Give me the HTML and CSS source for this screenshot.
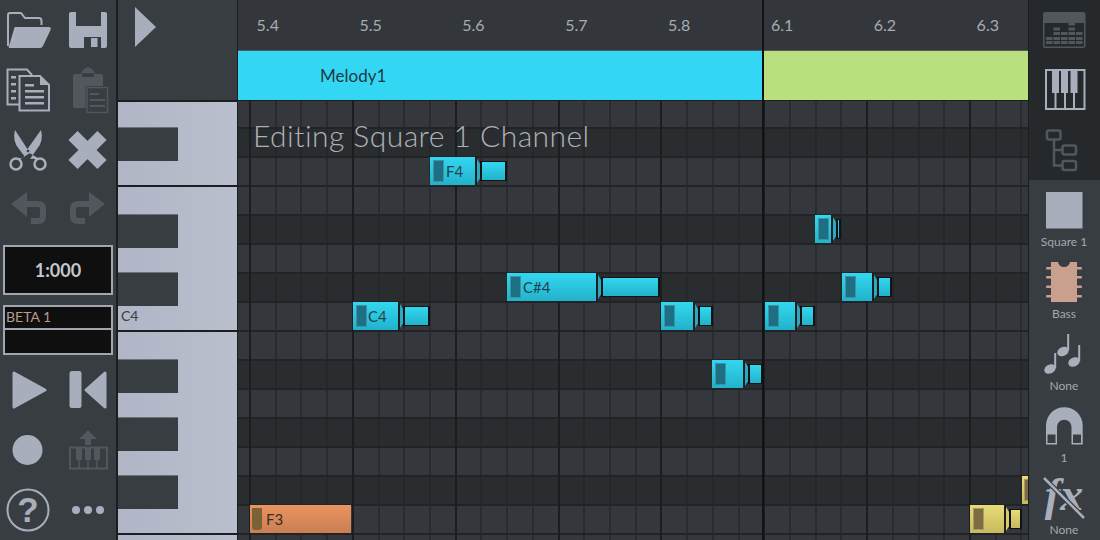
FILE: index.html
```html
<!DOCTYPE html>
<html lang="en">
<head>
  <meta charset="UTF-8">
  <title>Piano Roll</title>
  <link rel="stylesheet" href="styles.css">
</head>
<body>
<div class="app">

  <!-- left toolbar -->
  <aside class="toolbar">
    <div class="tool-row">
      <svg class="icon" viewBox="5 6 48 48"><path class="line" fill="none" stroke-width="2" d="M8 46 V15 Q8 13 10 13 H21 L25 18 H39 Q41.500 18 41.500 21 V25"/><path d="M15 27 H49 Q51.500 27 50.500 30 L43 46 Q42 48 40 48 H10 Q8 48 9 46 L14 29 Q14.500 27 15 27 Z"/></svg>
      <svg class="icon" viewBox="63 6 48 48"><path fill-rule="evenodd" d="M71 12 H105 Q107 12 107 14 V46 Q107 48 105 48 H71 Q69 48 69 46 V14 Q69 12 71 12 Z M76 12 V26 H101 V12 Z M84 37 V48 H101 V37 Z"/><rect x="91" y="38" width="6.500" height="9"/></svg>
    </div>
    <div class="tool-row">
      <svg class="icon" viewBox="5 66 48 48"><g class="line" fill="none" stroke-width="2"><path d="M19 104.500 H7.500 V69.500 H27 L32 75"/><path d="M19.500 76 H40 L49 85 V110.500 H19.500 Z"/></g><path d="M40 76 L49 85 H40 Z"/><rect x="11" y="76" width="5" height="2.500"/><rect x="11" y="83" width="5" height="2.500"/><rect x="11" y="90" width="5" height="2.500"/><rect x="11" y="97" width="5" height="2.500"/><rect x="25" y="84" width="9" height="2.500"/><rect x="25" y="90" width="19" height="2.500"/><rect x="25" y="96" width="19" height="2.500"/><rect x="25" y="102" width="19" height="2.500"/></svg>
      <svg class="icon off" viewBox="63 66 48 48"><path d="M75 74 H81 Q83 68 88 67.500 Q93 68 95 74 H101 Q103 74 103 76 V108 H75 Q73 108 73 106 V76 Q73 74 75 74 Z"/><rect class="hole" x="82" y="73" width="12" height="4" rx="1.500"/><rect class="hole" x="85.500" y="86" width="23.500" height="28.500"/><rect x="87" y="87.500" width="20.500" height="25" fill="none" class="line" stroke-width="1.500"/><rect x="90" y="93" width="9" height="2"/><rect x="90" y="99" width="15" height="2"/><rect x="90" y="105" width="15" height="2"/></svg>
    </div>
    <div class="tool-row">
      <svg class="icon" viewBox="5 126 48 48"><circle class="line" cx="16" cy="164" r="5.500" fill="none" stroke-width="2.500"/><circle class="line" cx="40" cy="164" r="5.500" fill="none" stroke-width="2.500"/><path d="M15 130 Q12 141 19 149 L25 157 Q21 157 20 160 L18 158 L22 158 L30 153 Z"/><path d="M41 130 Q44 141 37 149 L30 159 Q34 158 36 160 L38 158 L26 151 Z"/><circle class="hole" cx="28" cy="151" r="1.300"/></svg>
      <svg class="icon" viewBox="63 126 48 48"><path class="line" fill="none" stroke-width="13" d="M73 135.500 L102 164.500 M102 135.500 L73 164.500"/></svg>
    </div>
    <div class="tool-row">
      <svg class="icon off" viewBox="5 185 48 48"><path d="M11 204 L27 192 V217 Z"/><path class="line" fill="none" stroke-width="6" d="M24 204 H38 Q43 204 43 209 V216 Q43 221 38 221 H31"/></svg>
      <svg class="icon off" viewBox="63 185 48 48"><path d="M105 204 L89 192 V217 Z"/><path class="line" fill="none" stroke-width="6" d="M92 204 H78 Q73 204 73 209 V216 Q73 221 78 221 H85"/></svg>
    </div>

    <div class="time-box">1:000</div>
    <div class="beta-box">
      <div class="beta-line">BETA 1</div>
      <div class="beta-line"></div>
    </div>

    <div class="tool-row">
      <svg class="icon" viewBox="5 366 48 48"><path class="line" fill="#a9aebc" stroke-width="3" stroke-linejoin="round" d="M14 373 L45 390 L14 407 Z"/></svg>
      <svg class="icon" viewBox="63 366 48 48"><rect x="69.500" y="371" width="12" height="37" rx="2.500"/><path class="line" fill="#a9aebc" stroke-width="3" stroke-linejoin="round" d="M105 373 L86 390 L105 407 Z"/></svg>
    </div>
    <div class="tool-row">
      <svg class="icon" viewBox="5 426 48 48"><circle cx="27.500" cy="450" r="15"/></svg>
      <svg class="icon off" viewBox="63 426 48 48"><path d="M88 430 L97 439 H91 V445 H85 V439 H79 Z"/><rect class="line" x="70" y="447.500" width="37" height="21" fill="none" stroke-width="2"/><rect x="76" y="447" width="6" height="13"/><rect x="85" y="447" width="6" height="13"/><rect x="94" y="447" width="6" height="13"/><path class="line" stroke-width="1.500" d="M79 460 V468 M88 460 V468 M97 460 V468"/></svg>
    </div>
    <div class="tool-row">
      <svg class="icon" viewBox="5 486 48 48"><circle class="line" cx="28" cy="510" r="20.500" fill="none" stroke-width="2"/><text class="help-mark" x="28" y="522">?</text></svg>
      <svg class="icon" viewBox="63 486 48 48"><circle cx="76" cy="510" r="4"/><circle cx="88" cy="510" r="4"/><circle cx="100" cy="510" r="4"/></svg>
    </div>
  </aside>

  <!-- middle: keys on the left, ruler / song / notes on the right -->
  <div class="side-col">
    <div class="corner">
      <svg class="corner-play" width="22" height="42" viewBox="0 0 22 42"><path d="M0 1 L21 21 L0 41 Z"/></svg>
    </div>
    <div class="piano">
      <div class="octave">
        <div class="black-key black-top"></div>
      </div>
      <div class="octave">
        <div class="black-key black-first"></div>
        <div class="black-key"></div>
        <div class="key-name">C4</div>
      </div>
      <div class="octave">
        <div class="black-key black-first"></div>
        <div class="black-key"></div>
        <div class="black-key"></div>
      </div>
    </div>
  </div>

  <main class="editor">
    <div class="ruler">
      <span>5.4</span><span>5.5</span><span>5.6</span><span>5.7</span><span>5.8</span><span>6.1</span><span>6.2</span><span>6.3</span>
    </div>
    <div class="song">
      <div class="clip clip-melody">Melody1</div>
      <div class="clip clip-green"></div>
    </div>
    <div class="roll">
      <div class="row row-first"></div>
      <div class="row row-dark"></div>
      <div class="row"></div>
      <div class="row"></div>
      <div class="row row-dark"></div>
      <div class="row"></div>
      <div class="row row-dark"></div>
      <div class="row"></div>
      <div class="row"></div>
      <div class="row row-dark"></div>
      <div class="row"></div>
      <div class="row row-dark"></div>
      <div class="row"></div>
      <div class="row row-dark"></div>
      <div class="row"></div>
      <div class="row"></div>

      <div class="gridlines"></div>
      <div class="roll-title">Editing Square 1 Channel</div>

      <!-- square 1 notes -->
      <div class="note note-f4"><div class="head">F4</div><div class="tail"></div></div>
      <div class="note note-d5"><div class="head"></div><div class="tail"></div></div>
      <div class="note note-cs4"><div class="head">C#4</div><div class="tail"></div></div>
      <div class="note note-cs4b"><div class="head"></div><div class="tail"></div></div>
      <div class="note note-c4"><div class="head">C4</div><div class="tail"></div></div>
      <div class="note note-c4b"><div class="head"></div><div class="tail"></div></div>
      <div class="note note-c4c"><div class="head"></div><div class="tail"></div></div>
      <div class="note note-a3"><div class="head"></div><div class="tail"></div></div>

      <!-- other channels -->
      <div class="note note-f3 orange"><div class="head">F3</div></div>
      <div class="note note-y1 yellow"><div class="head"></div><div class="tail"></div></div>
      <div class="note note-y2 yellow"><div class="head"></div></div>
    </div>
    <div class="divider"></div>
  </main>

  <!-- right panel -->
  <aside class="panel">
    <div class="panel-top">
      <div class="panel-btn">
        <svg class="icon off" viewBox="1040 6 48 48">
          <path fill-rule="evenodd" d="M1045 12 H1083 Q1085.500 12 1085.500 14.500 V46 Q1085.500 48 1083 48 H1045 Q1043 48 1043 46 V14.500 Q1043 12 1045 12 Z M1044.500 23 V46.500 H1084 V23 Z"/>
          <rect x="1046" y="41" width="6.500" height="3"/><rect x="1046" y="37" width="6.500" height="3"/>
          <rect x="1053.500" y="41" width="6.500" height="3"/><rect x="1053.500" y="37" width="6.500" height="3"/><rect x="1053.500" y="32" width="6.500" height="3"/><rect x="1053.500" y="27.500" width="6.500" height="3"/>
          <rect x="1061" y="41" width="6.500" height="3"/><rect x="1061" y="37" width="6.500" height="3"/><rect x="1061" y="32" width="6.500" height="3"/>
          <rect x="1068.500" y="41" width="6.500" height="3"/><rect x="1068.500" y="37" width="6.500" height="3"/><rect x="1068.500" y="32" width="6.500" height="3"/><rect x="1068.500" y="27.500" width="6.500" height="3"/><rect x="1068.500" y="22.500" width="6.500" height="3"/>
          <rect x="1076" y="41" width="6.500" height="3"/><rect x="1076" y="37" width="6.500" height="3"/><rect x="1076" y="32" width="6.500" height="3"/>
        </svg>
      </div>
      <div class="panel-btn">
        <svg class="icon" viewBox="1040 66 48 48">
          <rect class="line" x="1046" y="70" width="38.500" height="39" fill="none" stroke-width="2"/>
          <rect x="1052" y="70" width="7" height="23"/><rect x="1061" y="70" width="7" height="23"/><rect x="1070.500" y="70" width="7" height="23"/>
          <path class="line" stroke-width="2" d="M1055.500 93 V109 M1065 93 V109 M1074 93 V109"/>
        </svg>
      </div>
      <div class="panel-btn">
        <svg class="icon off" viewBox="1040 126 48 48">
          <g class="line" fill="none" stroke-width="2.500">
            <rect x="1047" y="130.500" width="13.500" height="9" rx="2"/>
            <rect x="1062.500" y="145.500" width="13.500" height="9" rx="2"/>
            <rect x="1062.500" y="161" width="13.500" height="9" rx="2"/>
            <path d="M1054 140 V165.500 H1062.500 M1054 150 H1062.500"/>
          </g>
        </svg>
      </div>
    </div>

    <div class="panel-item">
      <svg class="icon" viewBox="1040 186 48 48"><rect x="1046" y="192" width="36.500" height="36.500"/></svg>
      <div class="panel-label">Square 1</div>
    </div>
    <div class="panel-item">
      <svg class="icon chip" viewBox="1040 258 48 48">
        <path d="M1051 262 H1058 Q1059 267 1064 267 Q1069 267 1070 262 H1077 V302 H1051 Z"/>
        <rect x="1046" y="267" width="36" height="2.500" rx="1"/><rect x="1046" y="276" width="36" height="2.500" rx="1"/><rect x="1046" y="285.500" width="36" height="2.500" rx="1"/><rect x="1046" y="295" width="36" height="2.500" rx="1"/>
      </svg>
      <div class="panel-label">Bass</div>
    </div>
    <div class="panel-item">
      <svg class="icon" viewBox="1040 330 48 48">
        <ellipse cx="1050" cy="369" rx="6" ry="4.500" transform="rotate(-25 1050 369)"/><rect x="1054.200" y="353" width="2" height="15"/>
        <ellipse cx="1063" cy="351.500" rx="6" ry="4.500" transform="rotate(-25 1063 351.500)"/><rect x="1067.200" y="334" width="2" height="16"/>
        <ellipse cx="1074" cy="362" rx="6" ry="4.500" transform="rotate(-25 1074 362)"/><rect x="1078.200" y="345" width="2" height="16"/>
      </svg>
      <div class="panel-label">None</div>
    </div>
    <div class="panel-item">
      <svg class="icon" viewBox="1040 402 48 48">
        <path fill-rule="evenodd" d="M1046 444.500 V425.500 A18.300 18.300 0 0 1 1082.700 425.500 V444.500 H1071.500 V427 A7.200 7.200 0 0 0 1057 427 V444.500 Z"/>
        <rect class="hole" x="1047.500" y="434.500" width="8" height="8.500"/><rect class="hole" x="1073" y="434.500" width="8" height="8.500"/>
      </svg>
      <div class="panel-label">1</div>
    </div>
    <div class="panel-item">
      <svg class="icon fx-icon" viewBox="1040 474 48 48">
        <text class="fx-mark" x="1064" y="510">fx</text>
        <path class="slash-back" d="M1044 478 L1084 518"/>
        <path class="slash" d="M1044 478 L1084 518"/>
      </svg>
      <div class="panel-label">None</div>
    </div>
  </aside>

</div>
</body>
</html>
```

FILE: styles.css
```css
* {
  box-sizing: border-box;
}
html, body {
  margin: 0;
  padding: 0;
  height: 100%;
  background-color: #383d42;
  overflow: hidden;
}
body {
  font-family: 'Lato', sans-serif;
}
.app {
  display: flex;
  width: 1100px;
  height: 540px;
  overflow: hidden;
}

/* shared icon colours */
.icon {
  display: block;
  width: 48px;
  height: 48px;
  fill: #a9aebc;
  overflow: hidden;
}
.icon .line {
  stroke: #a9aebc;
}
.icon .hole {
  fill: #383d42;
}
.icon.off {
  fill: #52575d;
}
.icon.off .line {
  stroke: #52575d;
}

/* left toolbar */
.toolbar {
  width: 118px;
  flex-shrink: 0;
  border-right: 2px solid #1c1e20;
  background-color: #383d42;
}
.tool-row {
  display: grid;
  grid-template-columns: 58px 58px;
  height: 60px;
  align-items: center;
  justify-items: center;
}
.tool-row:nth-child(4) {
  height: 58px;
}
.time-box {
  margin: 7px 0 0 3px;
  width: 110px;
  height: 50px;
  border: 2px solid #a2a6b0;
  background-color: #0f0f10;
  color: #c4c8ce;
  font-size: 18px;
  font-weight: 700;
  line-height: 46px;
  text-align: center;
}
.beta-box {
  margin: 10px 0 5px 3px;
  width: 110px;
  height: 50px;
  display: flex;
  flex-direction: column;
}
.beta-line {
  height: 25px;
  border: 2px solid #a2a6b0;
  background-color: #0f0f10;
  color: #b89c8a;
  font-size: 14px;
  line-height: 20px;
  padding-left: 1px;
}
.beta-line + .beta-line {
  border-top: 0;
}
.help-mark {
  font-family: 'Liberation Sans', sans-serif;
  font-size: 35px;
  font-weight: 700;
  text-anchor: middle;
}

/* corner and keyboard */
.side-col {
  width: 119px;
  flex-shrink: 0;
  display: flex;
  flex-direction: column;
}
.corner {
  height: 102px;
  flex-shrink: 0;
  padding: 6px 0 0 17px;
  border-bottom: 2px solid #1c1e20;
  background-color: #383d42;
}
.corner-play {
  display: block;
  fill: #a9aebc;
}
.piano {
  flex: 1;
  display: flex;
  flex-direction: column;
  background: linear-gradient(to right, #b0b6c5, #b9bfcd);
}
.octave {
  border-bottom: 2px solid #1c1e20;
  flex-shrink: 0;
}
.octave:nth-child(1) {
  height: 85px;
}
.octave:nth-child(2) {
  height: 145px;
}
.octave:nth-child(3) {
  height: 203px;
}
.black-key {
  width: 60px;
  height: 34px;
  margin-top: 24px;
  background-color: #383d42;
  border-top: 1px solid #6b7079;
}
.black-top {
  margin-top: 25px;
}
.black-first {
  margin-top: 27px;
}
.key-name {
  margin: 2px 0 0 3px;
  color: #3a3d42;
  font-size: 14px;
  line-height: 16px;
}

/* ruler, song strip and notes */
.editor {
  position: relative;
  width: 791px;
  flex-shrink: 0;
  border-left: 1px solid #1c1e20;
  display: flex;
  flex-direction: column;
}
.ruler {
  height: 51px;
  flex-shrink: 0;
  display: flex;
  padding-left: 18.600px;
  background-color: #33373b;
  border-bottom: 1px solid #55595e;
}
.ruler span {
  width: 102.86px;
  flex-shrink: 0;
  color: #a8acb2;
  font-size: 16px;
  line-height: 50px;
}
.song {
  height: 50px;
  flex-shrink: 0;
  display: flex;
  gap: 2px;
  background-color: #1c1e20;
  padding-bottom: 1px;
}
.clip {
  height: 49px;
}
.clip-melody {
  width: 524px;
  padding-left: 82px;
  background-color: #33d7f3;
  color: #1f3a42;
  font-size: 17px;
  line-height: 50px;
}
.clip-green {
  flex: 1;
  background-color: #b9e07f;
}
.roll {
  position: relative;
  flex: 1;
  overflow: hidden;
}
.row {
  height: 29px;
  background-color: #34383c;
  border-bottom: 2px solid #212326;
}
.row-first {
  height: 28px;
}
.row-dark {
  background-color: #2a2d30;
}
.gridlines {
  position: absolute;
  top: 0;
  right: 0;
  bottom: 0;
  left: 0;
  background-image:
    repeating-linear-gradient(to right, #1b1d1f 0, #1b1d1f 2px, transparent 2px, transparent 102.86px),
    repeating-linear-gradient(to right, rgba(33, 35, 38, 0.6) 0, rgba(33, 35, 38, 0.6) 2px, transparent 2px, transparent 25.715px);
  background-position: 11px 0;
}
.divider {
  position: absolute;
  top: 0;
  bottom: 0;
  left: 524px;
  width: 2px;
  background-color: #111213;
}
.roll-title {
  position: absolute;
  top: 15px;
  left: 15px;
  color: #aeb2b7;
  font-size: 30px;
  font-weight: 300;
  letter-spacing: 0.45px;
  line-height: 38px;
  white-space: nowrap;
}

.note {
  position: absolute;
  display: flex;
  align-items: center;
  height: 28px;
}
.head {
  position: relative;
  height: 28px;
  padding-left: 16px;
  border-right: 2px solid #1c1e20;
  background: linear-gradient(#33d7f0, #22b2cb);
  color: #24424b;
  font-size: 15px;
  line-height: 28px;
}
.head::before {
  content: "";
  position: absolute;
  top: 3px;
  bottom: 3px;
  left: 3px;
  width: 9px;
  background-color: #1e6f83;
  border: 1px solid #3a93a6;
}
.head::after {
  content: "";
  position: absolute;
  top: 2px;
  bottom: 2px;
  right: -5px;
  width: 3px;
  background: #2aa9c0;
  clip-path: polygon(0 0, 100% 20%, 100% 80%, 0 100%);
}
.tail {
  height: 20px;
  margin-left: 3px;
  border: 1px solid #111213;
  border-width: 1px 2px;
  background: linear-gradient(#33d7f0, #22b2cb);
}
.note-f4 { left: 192px; top: 56px; }
.note-f4 .head { width: 47px; }
.note-f4 .tail { width: 27px; }
.note-d5 { left: 577px; top: 114px; }
.note-d5 .head { width: 18px; padding: 0; }
.note-d5 .tail { width: 5px; }
.note-cs4 { left: 269px; top: 172px; }
.note-cs4 .head { width: 91px; }
.note-cs4 .tail { width: 59px; }
.note-cs4b { left: 604px; top: 172px; }
.note-cs4b .head { width: 32px; padding: 0; }
.note-cs4b .tail { width: 15px; }
.note-c4 { left: 115px; top: 201px; }
.note-c4 .head { width: 47px; padding-left: 15px; }
.note-c4 .tail { width: 27px; }
.note-c4b { left: 423px; top: 201px; }
.note-c4b .head { width: 34px; padding: 0; }
.note-c4b .tail { width: 15px; }
.note-c4c { left: 527px; top: 201px; }
.note-c4c .head { width: 32px; padding: 0; }
.note-c4c .tail { width: 15px; }
.note-a3 { left: 474px; top: 259px; }
.note-a3 .head { width: 33px; padding: 0; }
.note-a3 .tail { width: 15px; }

.orange .head {
  background: linear-gradient(#ea9460, #c97f52);
  color: #3d2c20;
  padding-left: 16px;
  border-right: 0;
}
.orange .head::before {
  left: 2px;
  width: 10px;
  background-color: #7a6238;
  border: 0;
  border-radius: 0 0 3px 3px;
}
.orange .head::after {
  display: none;
}
.note-f3 { left: 12px; top: 404px; }
.note-f3 .head { width: 101px; }
.yellow .head,
.yellow .tail {
  background: linear-gradient(#e8dc78, #c8b95e);
}
.yellow .head::before {
  background-color: #7d6c3f;
  border-color: #a89a70;
}
.yellow .head::after {
  background: #d8cb68;
}
.note-y1 { left: 732px; top: 404px; }
.note-y1 .head { width: 36px; padding: 0; }
.note-y1 .tail { width: 13px; }
.note-y2 { left: 784px; top: 375px; }
.note-y2 .head { width: 6px; padding: 0; border-right: 0; }
.note-y2 .head::before { left: 2px; width: 9px; }
.note-y2 .head::after { display: none; }

/* right panel */
.panel {
  width: 72px;
  flex-shrink: 0;
  padding-right: 1px;
  border-left: 1px solid #1c1e20;
  background-color: #383d42;
}
.panel-top {
  background-color: #26292c;
  margin-right: -1px;
}
.panel-btn {
  height: 60px;
  display: flex;
  align-items: center;
  justify-content: center;
  padding-right: 1px;
}
.panel-item {
  height: 72px;
  padding-top: 6px;
  display: flex;
  flex-direction: column;
  align-items: center;
}
.panel-label {
  margin-top: 1px;
  color: #a4a8b0;
  font-size: 12px;
  line-height: 14px;
}
.chip {
  fill: #c9a08e;
}
.fx-icon {
  overflow: visible;
}
.fx-mark {
  font-family: 'Liberation Serif', serif;
  font-size: 46px;
  font-style: italic;
  font-weight: 700;
  text-anchor: middle;
}
.slash-back {
  fill: none;
  stroke: #383d42;
  stroke-width: 5;
}
.slash {
  fill: none;
  stroke: #a9aebc;
  stroke-width: 2.5;
}
```
